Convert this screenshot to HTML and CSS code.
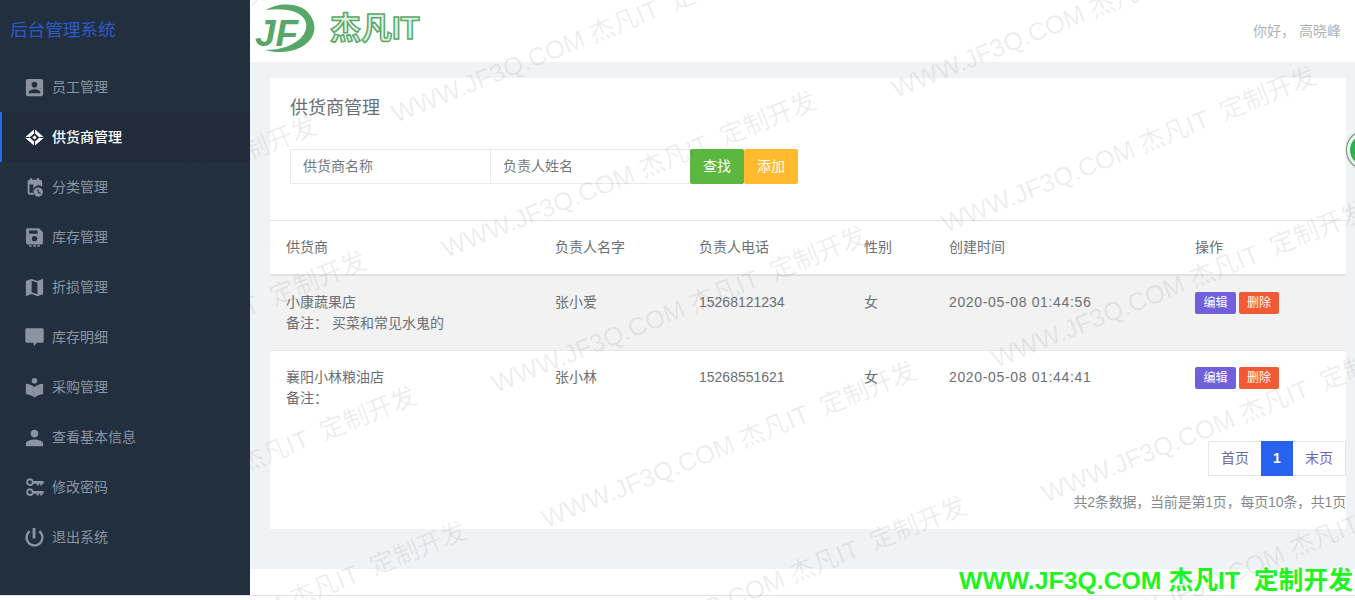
FILE: index.html
```html
<!DOCTYPE html>
<html lang="zh-CN">
<head>
<meta charset="utf-8">
<title>供货商管理</title>
<link rel="stylesheet" href="styles.css">
</head>
<body>
<div class="app">
  <aside class="sidebar">
    <div class="brand">后台管理系统</div>
    <nav class="menu">
      <a class="menu-item"><svg class="ico" viewBox="0 0 24 24"><path d="M3 5v14c0 1.100.89 2 2 2h14c1.100 0 2-.9 2-2V5c0-1.100-.9-2-2-2H5c-1.110 0-2 .9-2 2zm12 4c0 1.660-1.340 3-3 3s-3-1.340-3-3 1.340-3 3-3 3 1.340 3 3zm-9 8c0-2 4-3.100 6-3.100s6 1.100 6 3.100v1H6v-1z"/></svg>员工管理</a>
      <a class="menu-item active"><svg class="ico" viewBox="-3 -3 30 30"><path fill-rule="evenodd" d="M12 1 23.500 11 23.500 13 12 23 .5 13 .5 11zM12 6 5.500 12 12 18 18.500 12zM12 9.500 14.800 12 12 14.500 9.200 12z"/><path class="ico-cut" d="M12 1V6M12 18V23M.5 12H5.500M18.500 12H23.500"/></svg>供货商管理</a>
      <a class="menu-item"><svg class="ico" viewBox="-3 -3 30 30"><path d="M6 0h3v2h6V0h3v2h1.500C20.900 2 22 3.100 22 4.500V11a7.500 7.500 0 0 0-10.500 10.500H5.500C4.100 21.500 3 20.400 3 19V4.500C3 3.100 4.100 2 5.500 2H6zM5.500 8v11h5V8z"/><path fill-rule="evenodd" d="M17 12a6 6 0 1 1 0 12 6 6 0 0 1 0-12zm-1 2.500V18.500l3.500 2 .8-1.300-2.800-1.600v-3.100z"/></svg>分类管理</a>
      <a class="menu-item"><svg class="ico" viewBox="-3 -3 30 30"><path d="M18 0H3C1.900 0 1 .9 1 2v17c0 1.100.9 2 2 2h18c1.100 0 2-.9 2-2V5zm-6 17a3.500 3.500 0 1 1 0-7 3.500 3.500 0 0 1 0 7zm4-10H5V3h11z"/><path d="M5 22h3.500v2H5zM10.300 22h3.500v2h-3.500zM15.500 22H19v2h-3.500z"/></svg>库存管理</a>
      <a class="menu-item"><svg class="ico" viewBox="0 0 24 24"><path d="M20.500 3l-.16.03L15 5.100 9 3 3.360 4.900c-.21.07-.36.25-.36.48V20.500c0 .28.22.5.5.5l.16-.03L9 18.900l6 2.100 5.640-1.900c.21-.07.36-.25.36-.48V3.500c0-.28-.22-.5-.5-.5zM15 19l-6-2.110V5l6 2.110V19z"/></svg>折损管理</a>
      <a class="menu-item"><svg class="ico" viewBox="-3 -3 30 30"><path d="M2 0h20c1.100 0 2 .9 2 2v15c0 1.100-.9 2-2 2h-7l-3.500 4-1-4H2c-1.100 0-2-.9-2-2V2C0 .9.9 0 2 0z"/></svg>库存明细</a>
      <a class="menu-item"><svg class="ico" viewBox="0 0 24 24"><path d="M12 11.550C9.640 9.350 6.480 8 3 8v11c3.480 0 6.640 1.350 9 3.550 2.360-2.190 5.520-3.550 9-3.550V8c-3.480 0-6.640 1.350-9 3.550zM12 8c1.660 0 3-1.340 3-3s-1.340-3-3-3-3 1.340-3 3 1.340 3 3 3z"/></svg>采购管理</a>
      <a class="menu-item"><svg class="ico" viewBox="0 0 24 24"><path d="M12 12c2.210 0 4-1.790 4-4s-1.790-4-4-4-4 1.790-4 4 1.790 4 4 4zm0 2c-2.670 0-9 1.340-9 4v3h18v-3c0-2.660-6.330-4-9-4z"/></svg>查看基本信息</a>
      <a class="menu-item"><svg class="ico" viewBox="-3 -3 30 30"><path fill-rule="evenodd" d="M6 0a5 5 0 0 1 4.800 3.500H24V7h-2v2.500h-2.500V7h-2v2.500H15V7h-4.200A5 5 0 1 1 6 0zm0 2.500a2.500 2.500 0 1 0 0 5 2.500 2.500 0 0 0 0-5zM6 13a5 5 0 0 1 4.800 3.500H24V20h-2v2.500h-2.500V20h-2v2.500H15V20h-4.200A5 5 0 1 1 6 13zm0 2.500a2.500 2.500 0 1 0 0 5 2.500 2.500 0 0 0 0-5z"/></svg>修改密码</a>
      <a class="menu-item"><svg class="ico" viewBox="0 0 24 24"><path d="M13 2h-3v11h3V2zm5 2.500l-2 2C17.900 7.900 19 9.800 19 12c0 3.870-3.130 7-7 7s-7-3.130-7-7c0-2.200 1.100-4.100 3-5.500l-2-2C3.900 6.300 2.500 9 2.500 12c0 5.250 4.250 9.500 9.500 9.500s9.500-4.250 9.500-9.500c0-3-1.400-5.700-3.500-7.500z"/></svg>退出系统</a>
    </nav>
  </aside>
  <div class="main">
    <header class="topbar">
      <svg class="logo" viewBox="0 0 175 62" aria-label="杰凡IT">
        <path class="logo-arc" d="M16 10C28 2 52 2 60 15 C72 32 58 48 40 51 C30 53 22 52 15 50 C30 50 46 46 54 34 C62 20 50 6 16 10z"/>
        <text class="logo-jf" x="5" y="46">JF</text>
        <text class="logo-name" x="80" y="39">杰凡IT</text>
      </svg>
      <span class="greeting">你好， 高晓峰</span>
    </header>
    <main class="content">
      <section class="card">
        <h2 class="title">供货商管理</h2>
        <form class="filters">
          <input class="field" placeholder="供货商名称">
          <input class="field" placeholder="负责人姓名">
          <button type="button" class="btn btn-search">查找</button>
          <button type="button" class="btn btn-add">添加</button>
        </form>
        <table class="grid">
          <colgroup>
            <col class="c1"><col class="c2"><col class="c3"><col class="c4"><col class="c5"><col class="c6">
          </colgroup>
          <thead>
            <tr><th>供货商</th><th>负责人名字</th><th>负责人电话</th><th>性别</th><th>创建时间</th><th>操作</th></tr>
          </thead>
          <tbody>
            <tr class="striped">
              <td>小康蔬果店<br>备注： 买菜和常见水鬼的</td><td>张小爱</td><td>15268121234</td><td>女</td><td class="date">2020-05-08 01:44:56</td>
              <td><a class="tag tag-edit">编辑</a><a class="tag tag-del">删除</a></td>
            </tr>
            <tr>
              <td>襄阳小林粮油店<br>备注：</td><td>张小林</td><td>15268551621</td><td>女</td><td class="date">2020-05-08 01:44:41</td>
              <td><a class="tag tag-edit">编辑</a><a class="tag tag-del">删除</a></td>
            </tr>
          </tbody>
        </table>
        <div class="pager">
          <a class="page page-first">首页</a><a class="page current">1</a><a class="page page-last">末页</a>
        </div>
        <p class="summary">共2条数据，当前是第1页，每页10条，共1页</p>
      </section>
    </main>
    <footer class="footer"></footer>
  </div>
</div>
<div class="float-ball"></div>
<svg class="watermark" viewBox="0 0 1355 600" aria-hidden="true">
  <text transform="translate(-104 148) rotate(-22)">WWW.JF3Q.COM 杰凡IT  定制开发</text>
  <text transform="translate(396 123) rotate(-22)">WWW.JF3Q.COM 杰凡IT  定制开发</text>
  <text transform="translate(896 98) rotate(-22)">WWW.JF3Q.COM 杰凡IT  定制开发</text>
  <text transform="translate(-54 283) rotate(-22)">WWW.JF3Q.COM 杰凡IT  定制开发</text>
  <text transform="translate(446 258) rotate(-22)">WWW.JF3Q.COM 杰凡IT  定制开发</text>
  <text transform="translate(946 233) rotate(-22)">WWW.JF3Q.COM 杰凡IT  定制开发</text>
  <text transform="translate(-4 418) rotate(-22)">WWW.JF3Q.COM 杰凡IT  定制开发</text>
  <text transform="translate(496 393) rotate(-22)">WWW.JF3Q.COM 杰凡IT  定制开发</text>
  <text transform="translate(996 368) rotate(-22)">WWW.JF3Q.COM 杰凡IT  定制开发</text>
  <text transform="translate(46 553) rotate(-22)">WWW.JF3Q.COM 杰凡IT  定制开发</text>
  <text transform="translate(546 528) rotate(-22)">WWW.JF3Q.COM 杰凡IT  定制开发</text>
  <text transform="translate(1046 503) rotate(-22)">WWW.JF3Q.COM 杰凡IT  定制开发</text>
  <text transform="translate(96 688) rotate(-22)">WWW.JF3Q.COM 杰凡IT  定制开发</text>
  <text transform="translate(596 663) rotate(-22)">WWW.JF3Q.COM 杰凡IT  定制开发</text>
  <text transform="translate(1096 638) rotate(-22)">WWW.JF3Q.COM 杰凡IT  定制开发</text>
</svg>
<div class="stamp">WWW.JF3Q.COM 杰凡IT&nbsp; 定制开发</div>
</body>
</html>
```
FILE: styles.css
```css
* { box-sizing: border-box; }
html, body { margin: 0; height: 600px; overflow: hidden; background: #fff; }
body { position: relative; font: 14px/21px "Liberation Sans", "Noto Sans CJK SC", sans-serif; color: #6b6f75; }

.app { display: grid; grid-template-columns: 250px 1fr; height: 596px; border-bottom: 1px solid #dfe1e3; }

.sidebar { background: #222f3f; height: 595px; }
.brand { height: 62px; padding-left: 10px; font-size: 17.600px; line-height: 60px; color: #2f59c9; }
.menu { display: flex; flex-direction: column; }
.menu-item { display: flex; align-items: center; height: 50px; padding-left: 23px; color: #8b95a1; }
.menu-item.active { color: #fff; font-weight: 500; background: #202c3b; box-shadow: inset 2px 0 0 #1f6ff0; }
.ico { width: 23px; height: 23px; margin-right: 6px; fill: #8b95a1; flex: none; }
.active .ico { fill: #fff; }
.ico-cut { fill: none; stroke: #202c3b; stroke-width: 1.500px; }
.active .ico-cut { fill: none; }

.main { display: flex; flex-direction: column; min-width: 0; }
.topbar { height: 62px; flex: none; display: flex; align-items: center; justify-content: space-between; padding-right: 14px; background: #fff; }
.logo { width: 175px; height: 62px; display: block; }
.logo-arc { fill: #57a868; }
.logo-jf { font: italic 700 37px "Liberation Sans", sans-serif; fill: #57a868; }
.logo-name { font: 700 31px "Liberation Sans", "Noto Sans CJK SC", sans-serif; fill: #dff0e2; stroke: #57a868; stroke-width: 1.500px; }
.greeting { color: #adb1b6; }

.content { flex: 1; padding: 16px 9px 40px 20px; background: #f0f3f6; min-height: 0; }
.card { height: 451px; background: #fff; display: flex; flex-direction: column; }
.title { margin: 20px 0 31px 20px; font-size: 18px; line-height: 20px; font-weight: 400; color: #6b6f75; }
.filters { display: flex; height: 35px; margin: 0 0 36px 20px; }
.field { width: 200px; height: 35px; padding: 0 12px 2px; border: 1px solid #eaeaea; border-right: 0; font: inherit; color: #6b6f75; background: transparent; outline: 0; }
.field::placeholder { color: #75797e; opacity: 1; }
.btn { width: 54px; height: 35px; border: 0; padding: 0; font: inherit; color: #fff; border-radius: 2px; }
.btn-search { background: #5cb740; }
.btn-add { background: #ffba2e; }

.grid { width: 100%; table-layout: fixed; border-collapse: collapse; border-top: 1px solid #e2e2e2; }
.c1 { width: 269px; } .c2 { width: 144px; } .c3 { width: 165px; } .c4 { width: 85px; } .c5 { width: 246px; }
.grid th { height: 54px; padding: 0 16px; font-weight: 400; text-align: left; border-bottom: 2px solid #e2e2e2; }
.grid td { padding: 16px; vertical-align: top; }
.grid tbody tr:first-child td { border-bottom: 1px solid #e8e8e8; }
.striped td { background: #f2f2f2; }
.date { letter-spacing: .65px; }
.tag { display: inline-block; height: 22px; margin: 0 3px 0 0; font-size: 12px; line-height: 22px; color: #fff; border-radius: 2px; vertical-align: top; text-align: center; }
.tag-edit { background: #7160dc; width: 41px; }
.tag-del { background: #f05a35; width: 40px; }

.pager { display: flex; justify-content: flex-end; margin-top: 16px; height: 35px; }
.page { height: 35px; line-height: 33px; text-align: center; border: 1px solid #e6e6e6; }
.page-first { width: 53px; border-right: 0; color: #6f6a99; }
.page-last { width: 53px; border-left: 0; color: #7266ba; }
.current { width: 32px; background: #2962ef; border-color: #2962ef; color: #fff; font-weight: 700; }
.summary { margin: 16px 0 0; text-align: right; letter-spacing: -.2px; color: #85898e; }

.footer { height: 26px; flex: none; background: #fff; }

.float-ball { position: absolute; left: 1347px; top: 131px; width: 38px; height: 38px; border-radius: 50%; background: #2fb24f; border: 3px solid #f2f5f2; box-shadow: 0 0 0 1px #6b8f78, 0 0 3px #777; }
.watermark { position: absolute; left: 0; top: 0; width: 1355px; height: 600px; pointer-events: none; }
.watermark text { font: 25.400px "Liberation Sans", "Noto Sans CJK SC", sans-serif; fill: rgba(60, 60, 60, .09); white-space: pre; }
.stamp { position: absolute; right: 2px; top: 566px; font: 700 24.800px/30px "Liberation Sans", "Noto Sans CJK SC", sans-serif; color: #1ef41e; white-space: pre; }
```
